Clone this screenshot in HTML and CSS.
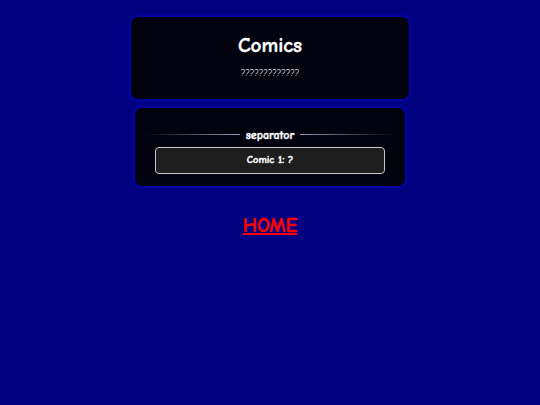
FILE: index.html
```html
<!DOCTYPE html>
<html>
<head>
<meta charset="utf-8">
<title>Comics</title>
<link rel="stylesheet" href="styles.css">
</head>
<body>

<div class="page">
	<div class="card header">
		<h1>Comics</h1>
		<p class="sub">?????????????</p>
	</div>

	<div class="card list">
		<div class="sep">separator</div>
		<a class="comic" href="#">Comic 1: ?</a>
	</div>

	<a class="home" href="#">HOME</a>
</div>

</body>
</html>
```

FILE: styles.css
```css
html { background-color: #000080; }
body { margin: 0; font-family: "Comic Sans MS", "Comic Neue", cursive, sans-serif; color: #fff; }

.page { display: flex; flex-direction: column; align-items: center; padding-top: 17px; }

/* bold face is thin in the fallback font, so thicken it a bit */
.header h1, .sep, .comic, .home { font-weight: 900; -webkit-text-stroke: 0.4px currentColor; }

.card { background-color: #03020f; border-radius: 7px; box-shadow: 0 0 5px #0b0bd8; }
.header { width: 278px; height: 82px; text-align: center; box-sizing: border-box; padding-top: 16px; }
.header h1 { margin: 0; font-size: 21px; line-height: 24px; }
.header .sub { margin: 10px 0 0; font-size: 9px; line-height: 12px; color: #e8e8f0; }

.list { width: 270px; height: 78px; margin-top: 9px; box-sizing: border-box; padding: 21px 20px 0 20px; }
.sep { display: flex; align-items: center; gap: 6px; height: 12px; margin: 0 -10px; font-size: 12px; line-height: 12px; padding-bottom: 2px; }
.sep:before, .sep:after { content: ""; flex: 1; height: 1px; margin-top: -2px; }
.sep:before { background: linear-gradient(to right, transparent, #9a9ab4); }
.sep:after { background: linear-gradient(to left, transparent, #9a9ab4); }

.comic { display: block; margin-top: 4px; height: 27px; line-height: 25px; box-sizing: border-box;
	background-color: #1e1e1e; border: 1px solid #c8c8c8; border-radius: 4px;
	text-align: center; color: #fff; text-decoration: none; font-size: 10.5px; }

.home { margin-top: 28px; color: #ff0000; font-size: 20px; text-decoration: underline; }
```
